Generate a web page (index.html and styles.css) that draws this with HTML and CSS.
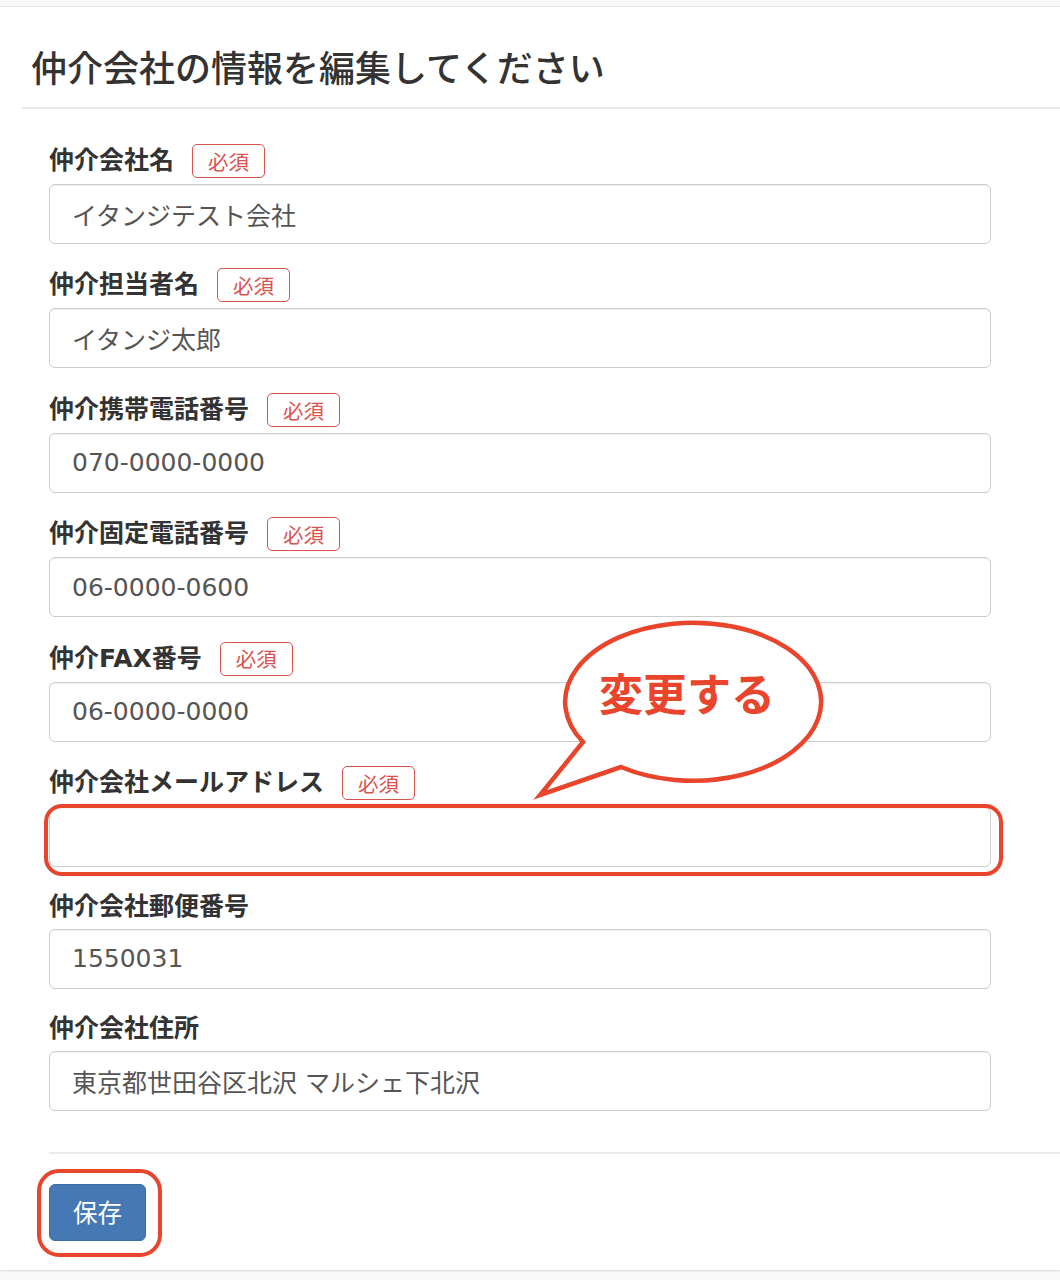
FILE: index.html
```html
<!DOCTYPE html>
<html lang="ja">
<head>
<meta charset="utf-8">
<title>仲介会社の情報を編集してください</title>
<link rel="stylesheet" href="styles.css">
</head>
<body>
<div class="page">
  <div class="card">
    <div class="card-header">
      <h1 class="title">仲介会社の情報を編集してください</h1>
    </div>
    <form class="form">
      <div class="group">
        <div class="label">仲介会社名<span class="badge">必須</span></div>
        <input class="input" type="text" value="イタンジテスト会社">
      </div>
      <div class="group">
        <div class="label">仲介担当者名<span class="badge">必須</span></div>
        <input class="input" type="text" value="イタンジ太郎">
      </div>
      <div class="group">
        <div class="label">仲介携帯電話番号<span class="badge">必須</span></div>
        <input class="input" type="text" value="070-0000-0000">
      </div>
      <div class="group">
        <div class="label">仲介固定電話番号<span class="badge">必須</span></div>
        <input class="input" type="text" value="06-0000-0600">
      </div>
      <div class="group">
        <div class="label">仲介FAX番号<span class="badge">必須</span></div>
        <input class="input" type="text" value="06-0000-0000">
      </div>
      <div class="group group-email">
        <div class="label">仲介会社メールアドレス<span class="badge">必須</span></div>
        <div class="highlight">
          <input class="input" type="text" value="">
        </div>
      </div>
      <div class="group">
        <div class="label">仲介会社郵便番号</div>
        <input class="input" type="text" value="1550031">
      </div>
      <div class="group">
        <div class="label">仲介会社住所</div>
        <input class="input" type="text" value="東京都世田谷区北沢 マルシェ下北沢">
      </div>
    </form>
    <div class="footer">
      <span class="btn-wrap"><button class="btn" type="button">保存</button></span>
    </div>
  </div>
  <svg class="bubble" width="320" height="200" viewBox="530 610 320 200" xmlns="http://www.w3.org/2000/svg">
    <path d="M583,742 L540,795 L621,767 A128,79 0 1,0 583,742 Z" fill="#ffffff" stroke="#e8452c" stroke-width="4.5" stroke-linejoin="miter"/>
    <text x="599" y="711" class="bubble-text">変更する</text>
  </svg>
</div>
</body>
</html>
```

FILE: styles.css
```css
* {
  box-sizing: border-box;
}

html, body {
  margin: 0;
  padding: 0;
}

body {
  background: #f8f8f8;
  font-family: "Noto Sans CJK JP", "Noto Sans", sans-serif;
  color: #333;
}

.page {
  position: relative;
  width: 1060px;
  height: 1280px;
  padding-top: 6px;
}

.card {
  background: #fff;
  border-top: 1px solid #e6e6e6;
  box-shadow: 0 1px 2px rgba(0, 0, 0, 0.12);
  padding-bottom: 29px;
}

.card-header {
  margin-left: 22px;
  padding-left: 9px;
  height: 102px;
  border-bottom: 2px solid #e7e9ee;
  display: flex;
  align-items: center;
}

.title {
  margin: 0;
  font-size: 36px;
  font-weight: 500;
  color: #333;
  line-height: 1;
  padding-top: 18px;
}

.form {
  padding: 35px 69px 0 49px;
}

.group {
  margin-bottom: 24.4px;
}

.group:last-child {
  margin-bottom: 0;
}

.group-email .label {
  margin-top: 1px;
  margin-bottom: 7px;
}

.label {
  display: flex;
  align-items: center;
  min-height: 31.5px;
  font-family: "DejaVu Sans", "Noto Sans CJK JP", sans-serif;
  font-size: 25px;
  font-weight: 700;
  color: #333;
  margin-bottom: 6px;
  line-height: 30px;
}

.badge {
  display: inline-flex;
  align-items: center;
  justify-content: center;
  height: 34px;
  padding: 0 15px;
  margin-left: 18px;
  border: 1px solid #d9534f;
  border-radius: 5px;
  color: #d9534f;
  font-family: "Noto Sans CJK JP", sans-serif;
  font-size: 20.5px;
  font-weight: 400;
  line-height: 1;
}

.input {
  display: block;
  width: 100%;
  height: 60px;
  padding: 0 22px;
  border: 1px solid #cccccc;
  border-radius: 6px;
  box-shadow: inset 0 1px 1px rgba(0, 0, 0, 0.06);
  background: #fff;
  font-family: "DejaVu Sans", "Noto Sans CJK JP", sans-serif;
  font-size: 25px;
  color: #555;
  outline: none;
}

.highlight {
  position: relative;
}

.highlight::after {
  content: "";
  position: absolute;
  left: -5px;
  right: -12px;
  top: -3px;
  bottom: -9px;
  border: 4px solid #e8452c;
  border-radius: 18px;
  pointer-events: none;
}

.footer {
  margin-left: 49px;
  margin-top: 41px;
  border-top: 2px solid #ebebeb;
  padding-top: 30px;
}

.btn-wrap {
  position: relative;
  display: inline-block;
}

.btn-wrap::after {
  content: "";
  position: absolute;
  left: -12px;
  right: -16px;
  top: -15px;
  bottom: -16px;
  border: 4px solid #e8452c;
  border-radius: 22px;
  pointer-events: none;
}

.btn {
  display: block;
  height: 57px;
  padding: 0 23px;
  border: 1px solid #3a6ea5;
  border-radius: 6px;
  background: #4679b3;
  color: #fff;
  font-family: "Noto Sans CJK JP", "Noto Sans", sans-serif;
  font-size: 24.5px;
  line-height: 1;
}

.bubble {
  position: absolute;
  left: 530px;
  top: 610px;
  overflow: visible;
}

.bubble-text {
  font-family: "Noto Sans CJK JP", "Noto Sans", sans-serif;
  font-size: 44px;
  font-weight: 700;
  fill: #e8452c;
}
```
